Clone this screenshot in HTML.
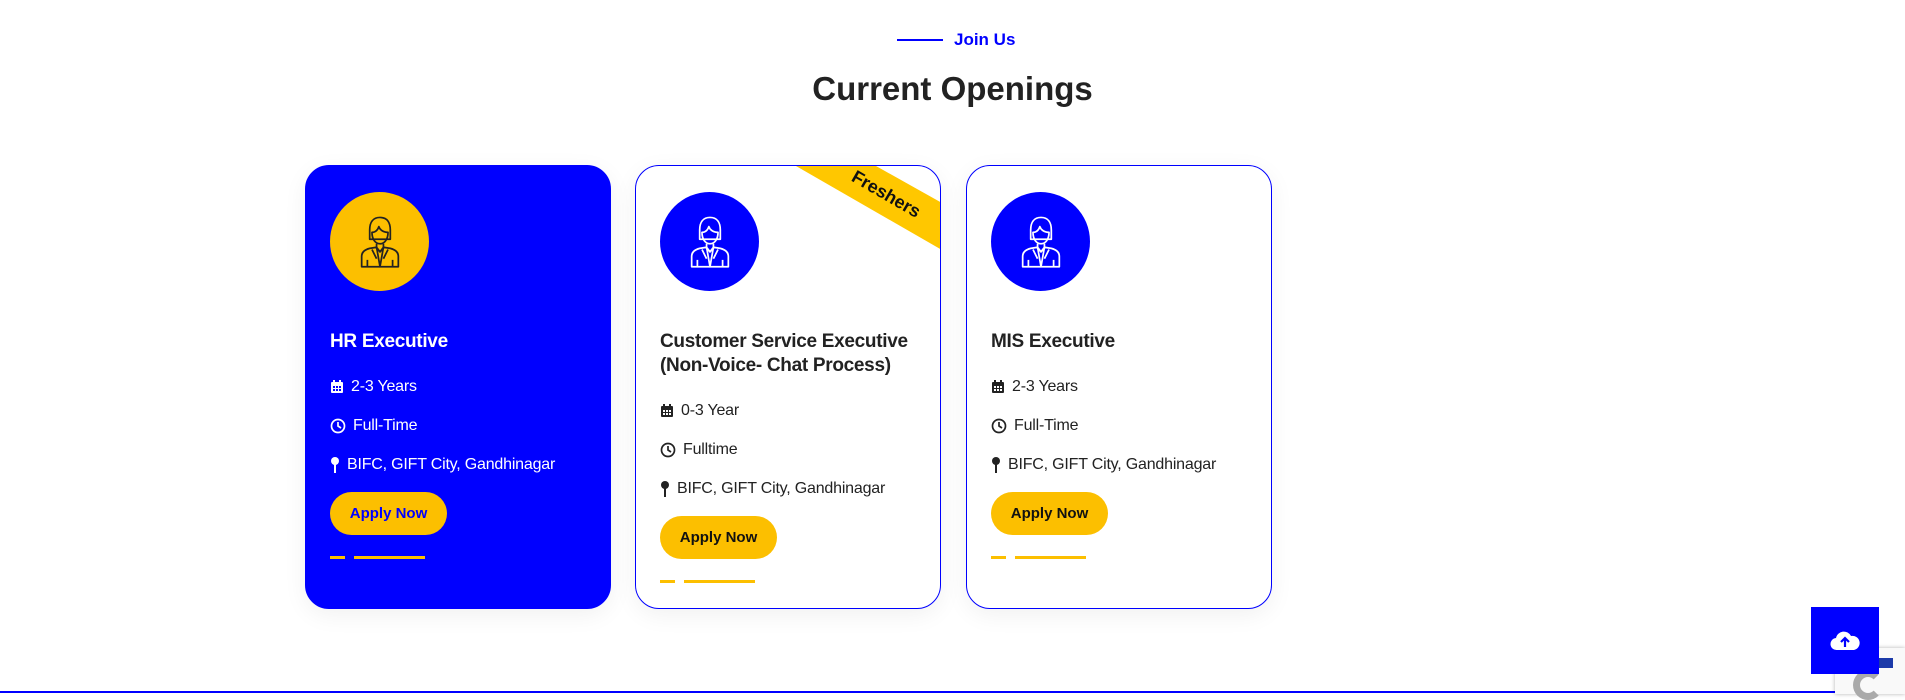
<!DOCTYPE html>
<html><head><meta charset="utf-8"><style>
*{margin:0;padding:0;box-sizing:border-box}
body{width:1905px;height:694px;background:#fff;font-family:"Liberation Sans",sans-serif;position:relative;overflow:hidden;color:#222}
.sub{position:absolute;left:897px;top:30px;height:20px;display:flex;align-items:center;color:#0000ff;font-size:17px;font-weight:bold}
.sub:before{content:"";width:46px;height:2px;background:#0000ff;margin-right:11px}
h2{position:absolute;left:0;width:1905px;text-align:center;top:70px;font-size:33px;font-weight:bold;color:#222}
.card{position:absolute;top:165px;width:306px;height:444px;border:1.5px solid #0000ff;border-radius:24px;background:#fff;overflow:hidden;box-shadow:0 6px 24px rgba(0,0,0,.06)}
.card.act{background:#0000ff;color:#fff}
.circ{position:absolute;left:24px;top:26px;width:99px;height:99px;border-radius:50%;background:#0000ff;display:flex;align-items:center;justify-content:center}
.act .circ{background:#fcbf00}
.title{position:absolute;left:24px;top:164px;width:270px;font-size:19px;font-weight:bold;line-height:24px;letter-spacing:-.3px}
.rows{position:absolute;left:24px;top:201px}
.c2 .rows{top:225px}
.row{height:39px;display:flex;align-items:center;font-size:16px;letter-spacing:-.2px}
.row svg{margin-right:7px}
.btn{position:absolute;left:24px;top:326px;width:117px;height:43px;border-radius:22px;background:#fcbf00;font-size:15px;font-weight:bold;display:flex;align-items:center;justify-content:center;color:#111}
.act .btn{color:#0000ff}
.c2 .btn{top:350px}
.ln{position:absolute;left:24px;top:390px;width:15px;height:3px;background:#fcbf00}
.ln2{position:absolute;left:48px;top:390px;width:71px;height:3px;background:#fcbf00}
.c2 .ln,.c2 .ln2{top:414px}
.rib{position:absolute;left:0;top:0;width:306px;height:90px;background:#ffc700;clip-path:polygon(160px 0,240px 0,306px 37px,306px 84px)}
.ribt{position:absolute;left:212px;top:18px;transform:rotate(30deg);font-size:18px;font-weight:bold;color:#111}
</style></head><body>
<div class="sub">Join Us</div>
<h2>Current Openings</h2>

<svg width="0" height="0" style="position:absolute"><defs>
<g id="p" fill="none" stroke-width="1.5" stroke-linejoin="round">
<path d="M11 14c0-7 3-11 9-11s9 4 9 11v8h-18z"/>
<path d="M13 16c0 6 3 10 7 10s7-4 7-10c-4 0-7-2-8-5-1 3-3 5-6 5z"/>
<path d="M17 26v4l3 3 3-3v-4"/>
<path d="M4 46v-9c0-4 3-6 7-7l6-1 3 4 3-4 6 1c4 1 7 3 7 7v9z"/>
<path d="M17 29l3 17 3-17M13 31l4 8M27 31l-4 8M9 40v6M31 40v6"/>
</g>
<g id="cal"><rect x="1" y="3" width="12" height="11" rx="1"/><rect x="3" y="1" width="2" height="3"/><rect x="9" y="1" width="2" height="3"/></g>
</defs></svg>

<div class="card act" style="left:305px">
 <div class="circ"><svg width="46" height="55" viewBox="0 0 40 48"><use href="#p" stroke="#222"/></svg></div>
 <div class="title">HR Executive</div>
 <div class="rows">
  <div class="row"><svg width="14" height="15" viewBox="0 0 14 15" fill="#fff"><use href="#cal"/><g fill="#0000ff"><rect x="3" y="7" width="2" height="2"/><rect x="6" y="7" width="2" height="2"/><rect x="9" y="7" width="2" height="2"/><rect x="3" y="10" width="2" height="2"/><rect x="6" y="10" width="2" height="2"/><rect x="9" y="10" width="2" height="2"/></g></svg>2-3 Years</div>
  <div class="row"><svg width="16" height="16" viewBox="0 0 16 16" fill="none" stroke="#fff" stroke-width="1.7"><circle cx="8" cy="8" r="6.5"/><path d="M8 4v4l3 2"/></svg>Full-Time</div>
  <div class="row"><svg width="10" height="18" viewBox="0 0 10 18" fill="#fff"><circle cx="5" cy="5" r="4"/><rect x="4" y="8" width="2" height="9"/></svg>BIFC, GIFT City, Gandhinagar</div>
 </div>
 <div class="btn">Apply Now</div>
 <div class="ln"></div><div class="ln2"></div>
</div>

<div class="card c2" style="left:635px">
 <div class="rib"></div><div class="ribt">Freshers</div>
 <div class="circ"><svg width="46" height="55" viewBox="0 0 40 48"><use href="#p" stroke="#fff"/></svg></div>
 <div class="title">Customer Service Executive (Non-Voice- Chat Process)</div>
 <div class="rows">
  <div class="row"><svg width="14" height="15" viewBox="0 0 14 15" fill="#222"><use href="#cal"/><g fill="#fff"><rect x="3" y="7" width="2" height="2"/><rect x="6" y="7" width="2" height="2"/><rect x="9" y="7" width="2" height="2"/><rect x="3" y="10" width="2" height="2"/><rect x="6" y="10" width="2" height="2"/><rect x="9" y="10" width="2" height="2"/></g></svg>0-3 Year</div>
  <div class="row"><svg width="16" height="16" viewBox="0 0 16 16" fill="none" stroke="#222" stroke-width="1.7"><circle cx="8" cy="8" r="6.5"/><path d="M8 4v4l3 2"/></svg>Fulltime</div>
  <div class="row"><svg width="10" height="18" viewBox="0 0 10 18" fill="#222"><circle cx="5" cy="5" r="4"/><rect x="4" y="8" width="2" height="9"/></svg>BIFC, GIFT City, Gandhinagar</div>
 </div>
 <div class="btn">Apply Now</div>
 <div class="ln"></div><div class="ln2"></div>
</div>

<div class="card" style="left:966px">
 <div class="circ"><svg width="46" height="55" viewBox="0 0 40 48"><use href="#p" stroke="#fff"/></svg></div>
 <div class="title">MIS Executive</div>
 <div class="rows">
  <div class="row"><svg width="14" height="15" viewBox="0 0 14 15" fill="#222"><use href="#cal"/><g fill="#fff"><rect x="3" y="7" width="2" height="2"/><rect x="6" y="7" width="2" height="2"/><rect x="9" y="7" width="2" height="2"/><rect x="3" y="10" width="2" height="2"/><rect x="6" y="10" width="2" height="2"/><rect x="9" y="10" width="2" height="2"/></g></svg>2-3 Years</div>
  <div class="row"><svg width="16" height="16" viewBox="0 0 16 16" fill="none" stroke="#222" stroke-width="1.7"><circle cx="8" cy="8" r="6.5"/><path d="M8 4v4l3 2"/></svg>Full-Time</div>
  <div class="row"><svg width="10" height="18" viewBox="0 0 10 18" fill="#222"><circle cx="5" cy="5" r="4"/><rect x="4" y="8" width="2" height="9"/></svg>BIFC, GIFT City, Gandhinagar</div>
 </div>
 <div class="btn">Apply Now</div>
 <div class="ln"></div><div class="ln2"></div>
</div>

<div style="position:absolute;left:0;top:691px;width:1836px;height:2px;background:#0000ff"></div>
<div style="position:absolute;left:1835px;top:648px;width:70px;height:46px;background:#f9f9f9;box-shadow:0 0 4px rgba(0,0,0,.3)">
 <div style="position:absolute;left:18px;top:22px;width:30px;height:30px;border:7px solid #aaa;border-radius:50%;border-right-color:transparent"></div>
 <div style="position:absolute;left:40px;top:10px;width:18px;height:10px;background:#1c3aa9"></div>
</div>
<div style="position:absolute;left:1811px;top:607px;width:68px;height:67px;background:#0000ff;display:flex;align-items:center;justify-content:center">
 <svg width="30" height="22" viewBox="0 0 30 22"><path d="M7 20a6 6 0 0 1-1-12 8 8 0 0 1 15-2 7 7 0 0 1 3 14z" fill="#fff"/><path d="M15 17v-8M11 12l4-4 4 4" stroke="#0000ff" stroke-width="2.2" fill="none"/></svg>
</div>
</body></html>
